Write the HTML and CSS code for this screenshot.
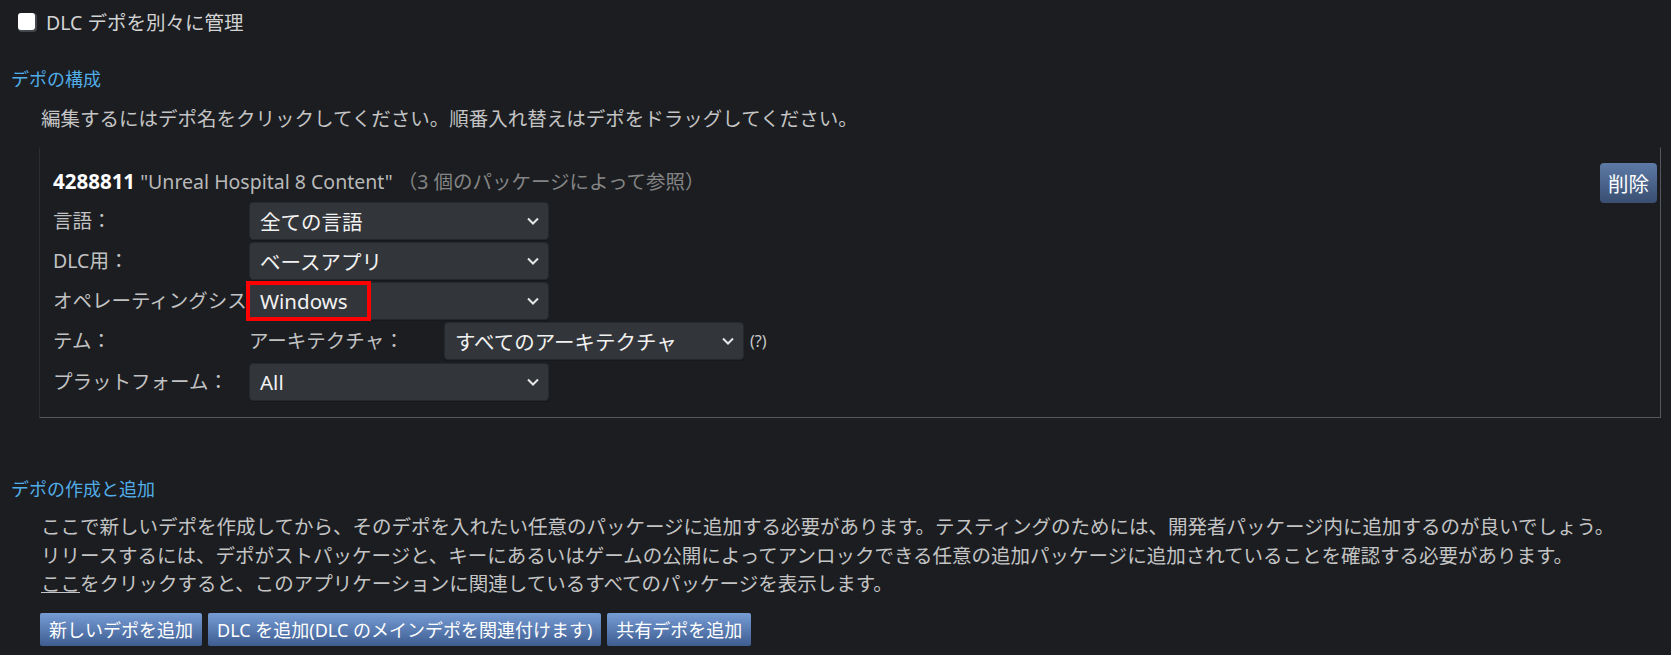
FILE: index.html
```html
<!DOCTYPE html>
<html lang="ja">
<head>
    <meta charset="UTF-8">
    <meta name="viewport" content="width=device-width, initial-scale=1.0">
    <title>デポ</title>
    <link rel="stylesheet" href="styles.css">
</head>
<body>
    <label class="check-row">
        <input type="checkbox" class="check">
        <span>DLC デポを別々に管理</span>
    </label>

    <h2 class="section-title">デポの構成</h2>
    <p class="hint">編集するにはデポ名をクリックしてください。順番入れ替えはデポをドラッグしてください。</p>

    <div class="depot-box">
        <button class="btn-delete">削除</button>
        <div class="depot-name">
            <b>4288811</b> "Unreal Hospital 8 Content" <span class="refs">（3 個のパッケージによって参照）</span>
        </div>

        <div class="fields">
            <div class="field-label">言語：</div>
            <div class="field-value">
                <div class="select"><span>全ての言語</span><svg class="chev" viewBox="0 0 12 8"><path d="M1 1.5 6 6.5 11 1.5"/></svg></div>
            </div>

            <div class="field-label">DLC用：</div>
            <div class="field-value">
                <div class="select"><span>ベースアプリ</span><svg class="chev" viewBox="0 0 12 8"><path d="M1 1.5 6 6.5 11 1.5"/></svg></div>
            </div>

            <div class="field-label">オペレーティングシステム：</div>
            <div class="field-value">
                <div class="select"><span>Windows</span><svg class="chev" viewBox="0 0 12 8"><path d="M1 1.5 6 6.5 11 1.5"/></svg>
                    <div class="mark"></div>
                </div>
                <div class="sub-row">
                    <div class="field-label">アーキテクチャ：</div>
                    <div class="select"><span>すべてのアーキテクチャ</span><svg class="chev" viewBox="0 0 12 8"><path d="M1 1.5 6 6.5 11 1.5"/></svg></div>
                    <span class="help">(?)</span>
                </div>
            </div>

            <div class="field-label last">プラットフォーム：</div>
            <div class="field-value last">
                <div class="select"><span>All</span><svg class="chev" viewBox="0 0 12 8"><path d="M1 1.5 6 6.5 11 1.5"/></svg></div>
            </div>
        </div>
    </div>

    <h2 class="section-title second">デポの作成と追加</h2>
    <div class="create">
        <p class="create-text">
            ここで新しいデポを作成してから、そのデポを入れたい任意のパッケージに追加する必要があります。テスティングのためには、開発者パッケージ内に追加するのが良いでしょう。<br>
            リリースするには、デポがストパッケージと、キーにあるいはゲームの公開によってアンロックできる任意の追加パッケージに追加されていることを確認する必要があります。<br>
            <a href="#">ここ</a>をクリックすると、このアプリケーションに関連しているすべてのパッケージを表示します。
        </p>
        <div class="actions">
            <button class="btn">新しいデポを追加</button>
            <button class="btn">DLC を追加(DLC のメインデポを関連付けます)</button>
            <button class="btn">共有デポを追加</button>
        </div>
    </div>
</body>
</html>
```

FILE: styles.css
```css
body {
    margin: 0;
    padding: 0 10px 0 11px;
    background-color: #1b1d21;
    color: #c4c4c4;
    font-family: "Noto Sans", "Noto Sans CJK JP", sans-serif;
    font-size: 19.5px;
}

.check-row {
    display: flex;
    align-items: center;
    height: 42px;
    color: #d2d2d2;
}

.check {
    appearance: none;
    width: 17px;
    height: 17px;
    margin: 0 11px 0 7px;
    background-color: #fff;
    border-radius: 3px;
    box-shadow: 1px 1px 0 1px #44474c;
}

.section-title {
    margin: 23px 0 0;
    font-size: 18px;
    font-weight: normal;
    line-height: 28px;
    color: #52ade8;
}

.section-title.second {
    margin-top: 57px;
}

.hint {
    margin: 12px 0 0;
    padding-left: 30px;
    line-height: 28px;
}

.depot-box {
    margin: 14px 0 0 28px;
    padding: 15px 3px 15px 13px;
    border-top: 1px solid transparent;
    border-left: 1px solid #2a2d32;
    border-right: 1px solid #55585d;
    border-bottom: 1px solid #55585d;
}

.depot-name {
    line-height: 36px;
    color: #b9b9b9;
}

.depot-name b {
    font-size: 20.5px;
    color: #fff;
}

.refs {
    color: #858585;
}

.btn-delete {
    float: right;
    height: 40px;
    padding: 0 8px;
    border: none;
    border-radius: 4px;
    background: linear-gradient(to bottom, #5d7aa6, #394e71);
    color: #fff;
    font-family: inherit;
    font-size: 20.5px;
}

.fields {
    display: grid;
    grid-template-columns: 196px auto;
    margin-top: 1px;
}

.field-label {
    line-height: 40px;
    color: #c2c2c2;
}

.field-label.last,
.field-value.last {
    margin-top: 1px;
}

.field-value {
    display: flex;
    flex-direction: column;
}

.select {
    position: relative;
    display: flex;
    align-items: center;
    justify-content: space-between;
    box-sizing: border-box;
    width: 300px;
    height: 38px;
    margin: 1px 0;
    padding: 0 9px 0 10px;
    background-color: #32363b;
    border: 1px solid #25282c;
    border-radius: 4px;
    box-shadow: 0 1px 0 #16181b;
    color: #f2f2f2;
    font-size: 20.5px;
}

.chev {
    width: 12px;
    height: 8px;
    fill: none;
    stroke: #e6e6e6;
    stroke-width: 2;
}

.mark {
    position: absolute;
    left: -4px;
    top: -2px;
    width: 117px;
    height: 32px;
    border: 4px solid #ff0000;
}

.sub-row {
    display: flex;
    align-items: center;
}

.sub-row .field-label {
    width: 195px;
}

.help {
    margin-left: 6px;
    font-size: 16px;
    color: #c8c8c8;
}

.create {
    padding-left: 29px;
}

.create-text {
    margin: 10px 0 0 1px;
    line-height: 28.5px;
}

.create-text a {
    color: #c4c4c4;
}

.actions {
    display: flex;
    gap: 6px;
    margin-top: 14px;
}

.btn {
    height: 33px;
    padding: 0 9px;
    border: none;
    border-radius: 2px;
    background: linear-gradient(to bottom, #769cd4, #3e5d91);
    color: #fff;
    font-family: inherit;
    font-size: 18px;
}
```
